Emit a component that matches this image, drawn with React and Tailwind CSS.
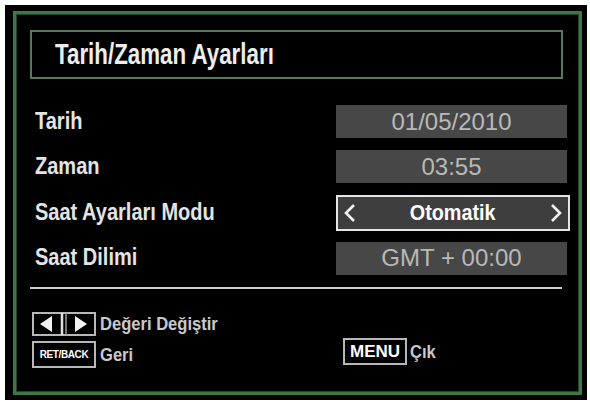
import React from "react";

const F = { fontFamily: '"Liberation Sans", Arial, sans-serif' };

function ValueBox({ children }) {
  return (
    <div className="w-[231px] h-[33px] mr-[12px] bg-[#474747] flex items-center justify-center text-[24px] leading-none text-[#b9b9b9]">
      {children}
    </div>
  );
}

function Label({ children }) {
  return (
    <div className="flex-1 pl-[19px] pt-[2px]">
      <span className="inline-block origin-left scale-x-[0.87] text-[23px] font-bold leading-none text-[#e4e4e4] whitespace-nowrap">
        {children}
      </span>
    </div>
  );
}

function Chevron({ dir }) {
  return (
    <svg width="14" height="22" viewBox="0 0 14 22">
      <polyline
        points={dir === "left" ? "11,3 3,11 11,19" : "3,3 11,11 3,19"}
        fill="none"
        stroke="#f2f2f2"
        strokeWidth="2.6"
        strokeLinejoin="miter"
      />
    </svg>
  );
}

export default function App() {
  return (
    <div className="w-[590px] h-[404px] bg-white pl-[5px] pt-[5px] pr-[3px] pb-[4px] flex" style={F}>
      <div className="flex-1 bg-black pl-[8px] pt-[6px] pr-[5px] pb-[5px] flex">
        <div className="flex-1 border-[3px] border-[#3e7845] shadow-[inset_0_0_0_1px_#24452a] flex flex-col">
          {/* Title */}
          <div className="mt-[16px] ml-[14px] w-[533px] h-[49px] border-2 border-[#587a5c] flex items-center pl-[23px]">
            <span className="inline-block origin-left scale-x-[0.77] text-[29px] font-bold leading-none text-[#ededed] whitespace-nowrap">
              Tarih/Zaman Ayarları
            </span>
          </div>

          {/* Rows */}
          <div className="mt-[20px] flex flex-col">
            <div className="h-[45px] flex items-center">
              <Label>Tarih</Label>
              <ValueBox>01/05/2010</ValueBox>
            </div>
            <div className="h-[45px] flex items-center">
              <Label>Zaman</Label>
              <ValueBox>03:55</ValueBox>
            </div>
            <div className="h-[48px] flex items-center">
              <Label>Saat Ayarları Modu</Label>
              <div className="w-[234px] h-[36px] mr-[9px] bg-[#3e3e3e] border-2 border-[#e6e6e6] flex items-center justify-between px-[5px] text-white">
                <Chevron dir="left" />
                <span className="inline-block scale-x-[0.9] text-[22px] leading-none font-bold">Otomatik</span>
                <Chevron dir="right" />
              </div>
            </div>
            <div className="h-[42px] flex items-center">
              <Label>Saat Dilimi</Label>
              <ValueBox>GMT + 00:00</ValueBox>
            </div>
          </div>

          {/* Divider */}
          <div className="mt-[8px] ml-[14px] w-[532px] h-[2px] bg-[#cfcfcf]" />

          {/* Keys */}
          <div className="mt-[23px] ml-[16px] flex items-center h-[24px]">
            <svg width="64" height="24" viewBox="0 0 64 24">
              <rect x="1" y="1" width="62" height="22" fill="none" stroke="#b8b8b8" strokeWidth="2" />
              <line x1="30" y1="1" x2="30" y2="23" stroke="#e0e0e0" strokeWidth="2.5" />
              <line x1="34" y1="1" x2="34" y2="23" stroke="#9a9a9a" strokeWidth="1.5" />
              <polygon points="8,12 20,4 20,20" fill="#f2f2f2" />
              <polygon points="55,12 43,4 43,20" fill="#f2f2f2" />
            </svg>
            <span className="ml-[4px] inline-block origin-left scale-x-[0.92] text-[18px] font-bold leading-none text-[#c9c9c9] whitespace-nowrap">
              Değeri Değiştir
            </span>
          </div>
          <div className="mt-[2px] ml-[16px] flex items-start">
            <div className="w-[311px] flex items-center mt-[3px]">
              <div className="w-[64px] h-[27px] border-2 border-[#b8b8b8] flex items-center justify-center">
                <span className="text-[10px] font-bold leading-none text-white tracking-[-0.4px]">RET/BACK</span>
              </div>
              <span className="ml-[4px] text-[18px] font-bold leading-none text-[#c9c9c9] inline-block origin-left scale-x-[0.92]">Geri</span>
            </div>
            <div className="flex items-center">
              <div className="w-[64px] h-[27px] border-2 border-[#b8b8b8] flex items-center justify-center">
                <span className="text-[17px] font-bold leading-none text-white">MENU</span>
              </div>
              <span className="ml-[3px] text-[18px] font-bold leading-none text-[#c9c9c9] inline-block origin-left scale-x-[0.92]">Çık</span>
            </div>
          </div>
        </div>
      </div>
    </div>
  );
}
